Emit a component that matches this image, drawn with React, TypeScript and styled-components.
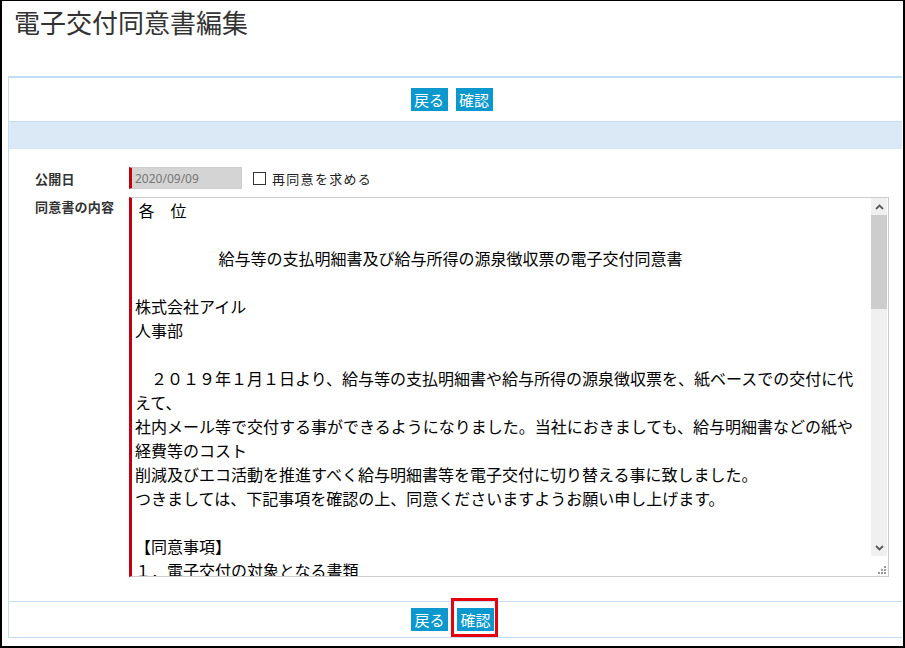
import React from "react";
import styled, { createGlobalStyle } from "styled-components";

const Global = createGlobalStyle`
  html, body { margin: 0; padding: 0; background: #fff; }
  body { font-family: "Noto Sans CJK JP", "Noto Sans", sans-serif; }
  * { box-sizing: border-box; }
`;

const Frame = styled.div`
  width: 905px;
  height: 648px;
  border-style: solid;
  border-color: #000;
  border-width: 1px 2px 2px 2px;
  background: #fff;
  overflow: hidden;
  display: flex;
  flex-direction: column;
`;

const Title = styled.h1`
  margin: 0;
  padding: 3px 0 0 12px;
  height: 75px;
  font-size: 26px;
  line-height: 36px;
  font-weight: normal;
  color: #333;
`;

const Panel = styled.div`
  margin-left: 6px;
  width: 894px;
  border-top: 2px solid #c5dcf5;
  border-left: 1px solid #c5dcf5;
  border-bottom: 1px solid #c5dcf5;
  display: flex;
  flex-direction: column;
`;

const ButtonBar = styled.div<{ $h: number }>`
  height: ${(p) => p.$h}px;
  display: flex;
  align-items: center;
  justify-content: center;
  gap: 8px;
  padding-right: 8px;
`;

const TopBar = styled(ButtonBar)`
  border-bottom: 1px solid #c5dcf5;
`;

const BottomBar = styled(ButtonBar)`
  border-top: 1px solid #c5dcf5;
  padding-right: 6px;
  gap: 9px;
`;

const Btn = styled.button`
  height: 23px;
  width: 37px;
  padding: 0;
  border: none;
  background: #0a98cf;
  color: #fff;
  font-family: "Noto Sans CJK JP", sans-serif;
  font-size: 15px;
  line-height: 23px;
  cursor: pointer;
`;

const Highlight = styled.span`
  position: relative;
  display: inline-flex;
  &::after {
    content: "";
    position: absolute;
    top: -10px;
    bottom: -6px;
    left: -6px;
    right: -4px;
    border: 3px solid #e8000b;
    pointer-events: none;
  }
`;

const BlueBand = styled.div`
  height: 27px;
  background: #dbe9f7;
`;

const Form = styled.div`
  padding: 18px 0 24px 26px;
  display: flex;
  flex-direction: column;
  gap: 8px;
`;

const Row = styled.div<{ $align: string }>`
  display: flex;
  align-items: ${(p) => p.$align};
`;

const Label = styled.div`
  width: 94px;
  flex: none;
  font-size: 13px;
  font-weight: bold;
  color: #333;
  letter-spacing: 0.2px;
`;

const DateInput = styled.input`
  width: 113px;
  height: 22px;
  border: 1px solid #ccc;
  border-left: 3px solid #c20010;
  background: #d4d4d4;
  color: #777;
  font-family: "Noto Sans", sans-serif;
  font-size: 12px;
  padding: 0 0 0 3px;
`;

const CheckLabel = styled.label`
  display: flex;
  align-items: center;
  margin-left: 11px;
  font-size: 13px;
  letter-spacing: 1.3px;
  color: #222;
  gap: 6px;
`;

const Check = styled.input`
  appearance: none;
  margin: 0;
  width: 13px;
  height: 13px;
  border: 1px solid #333;
  background: #fff;
`;

const Editor = styled.div`
  width: 760px;
  height: 380px;
  border: 1px solid #ccc;
  border-left: 3px solid #c20010;
  display: flex;
`;

const Content = styled.textarea`
  flex: 1;
  min-width: 0;
  height: 100%;
  border: none;
  padding: 0 3px 0 3px;
  font-family: "Noto Sans CJK JP", sans-serif;
  font-size: 16px;
  line-height: 24px;
  color: #000;
  resize: none;
  overflow: hidden;
  outline: none;
`;

const ScrollBar = styled.div`
  width: 17px;
  flex: none;
  display: flex;
  flex-direction: column;
  padding-right: 1px;
`;

const ScrollBtn = styled.div`
  height: 17px;
  flex: none;
  background: #f0f0f0;
  display: flex;
  align-items: center;
  justify-content: center;
`;

const Track = styled.div`
  flex: 1;
  background: #f0f0f0;
  display: flex;
  flex-direction: column;
`;

const Thumb = styled.div`
  height: 94px;
  background: #cdcdcd;
`;

const Corner = styled.div`
  height: 20px;
  flex: none;
  background: #fff;
  display: flex;
  align-items: flex-end;
  justify-content: flex-end;
  padding: 0 1px 2px 0;
`;

const text = [
  " 各　位",
  "",
  "　　　　　 給与等の支払明細書及び給与所得の源泉徴収票の電子交付同意書",
  "",
  "株式会社アイル",
  "人事部",
  "",
  "　２０１９年１月１日より、給与等の支払明細書や給与所得の源泉徴収票を、紙ベースでの交付に代えて、",
  "社内メール等で交付する事ができるようになりました。当社におきましても、給与明細書などの紙や経費等のコスト",
  "削減及びエコ活動を推進すべく給与明細書等を電子交付に切り替える事に致しました。",
  "つきましては、下記事項を確認の上、同意くださいますようお願い申し上げます。",
  "",
  "【同意事項】",
  "１．電子交付の対象となる書類",
  "　（１）給与等の支払明細書",
  "　（２）賞与等の支払明細書",
  "　（３）給与所得の源泉徴収票",
  "",
  "２．電子交付の方法",
  "　給与明細照会システムにて閲覧・ダウンロードしていただきます。",
].join("\n");

export default function App() {
  return (
    <>
      <Global />
      <Frame>
        <Title>電子交付同意書編集</Title>
        <Panel>
          <TopBar $h={44}>
            <Btn>戻る</Btn>
            <Btn>確認</Btn>
          </TopBar>
          <BlueBand />
          <Form>
            <Row $align="center">
              <Label>公開日</Label>
              <DateInput readOnly value="2020/09/09" />
              <CheckLabel>
                <Check type="checkbox" />
                再同意を求める
              </CheckLabel>
            </Row>
            <Row $align="flex-start">
              <Label>同意書の内容</Label>
              <Editor>
                <Content defaultValue={text} />
                <ScrollBar>
                  <ScrollBtn>
                    <svg width="9" height="6" viewBox="0 0 9 6">
                      <path d="M1 5 L4.5 1.5 L8 5" fill="none" stroke="#5a5a5a" strokeWidth="1.8" />
                    </svg>
                  </ScrollBtn>
                  <Track>
                    <Thumb />
                  </Track>
                  <ScrollBtn>
                    <svg width="9" height="6" viewBox="0 0 9 6">
                      <path d="M1 1 L4.5 4.5 L8 1" fill="none" stroke="#5a5a5a" strokeWidth="1.8" />
                    </svg>
                  </ScrollBtn>
                  <Corner>
                    <svg width="8" height="8" viewBox="0 0 8 8" fill="#9a9a9a">
                      <rect x="6" y="0" width="2" height="2" />
                      <rect x="3" y="3" width="2" height="2" />
                      <rect x="6" y="3" width="2" height="2" />
                      <rect x="0" y="6" width="2" height="2" />
                      <rect x="3" y="6" width="2" height="2" />
                      <rect x="6" y="6" width="2" height="2" />
                    </svg>
                  </Corner>
                </ScrollBar>
              </Editor>
            </Row>
          </Form>
          <BottomBar $h={36}>
            <Btn>戻る</Btn>
            <Highlight>
              <Btn>確認</Btn>
            </Highlight>
          </BottomBar>
        </Panel>
      </Frame>
    </>
  );
}
